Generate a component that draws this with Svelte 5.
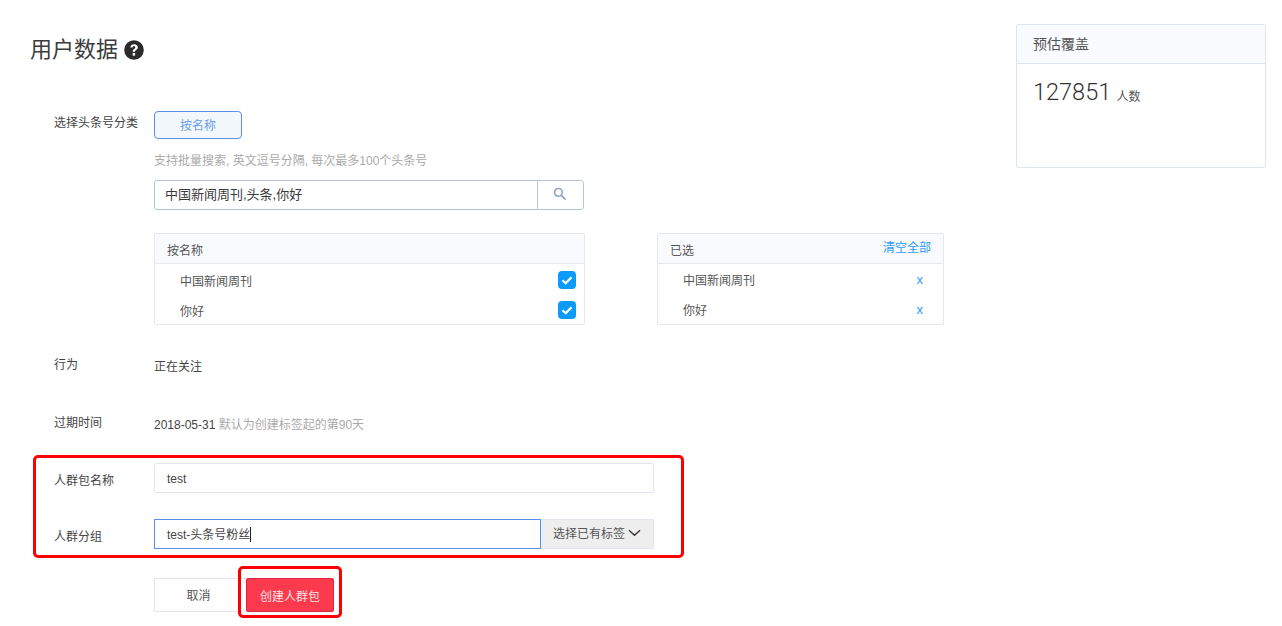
<script>
    const picked = ["中国新闻周刊", "你好"];
</script>

<div class="page">
    <main class="main">
        <h1 class="title">
            用户数据
            <svg class="help" viewBox="0 0 20 20" width="20" height="20">
                <circle cx="10" cy="10" r="9.800" fill="#2b2b2b" />
                <path d="M6.300 7.600c.2-2.200 1.700-3.400 3.800-3.400 2.200 0 3.700 1.300 3.700 3.100 0 1.400-.8 2.200-1.800 2.900-.8.5-1 .8-1 1.600H8.700c0-1.500.4-2.200 1.400-2.800.8-.5 1.200-.9 1.200-1.500 0-.7-.5-1.200-1.300-1.200-.9 0-1.400.5-1.500 1.300z" fill="#fff" />
                <rect x="8.700" y="13" width="2.400" height="2.600" fill="#fff" />
            </svg>
        </h1>

        <div class="row first">
            <div class="label">选择头条号分类</div>
            <div class="body">
                <button class="tab">按名称</button>
                <p class="hint">支持批量搜索, 英文逗号分隔, 每次最多100个头条号</p>
                <div class="search">
                    <div class="search-text">中国新闻周刊,头条,你好</div>
                    <div class="search-btn">
                        <svg viewBox="0 0 14 14" width="13" height="13" fill="none" stroke="#8fa6c2" stroke-width="1.700">
                            <circle cx="5.800" cy="5.800" r="4.200" />
                            <path d="M9 9l4 4" stroke-linecap="round" />
                        </svg>
                    </div>
                </div>
                <div class="panels">
                    <section class="panel left">
                        <div class="panel-head">按名称</div>
                        <ul class="list">
                            {#each picked as name}
                                <li>
                                    <span>{name}</span>
                                    <span class="check">
                                        <svg viewBox="0 0 18 18" width="18" height="18" fill="none" stroke="#fff" stroke-width="2.200">
                                            <path d="M4.500 9.200l3.200 3 5.800-6" />
                                        </svg>
                                    </span>
                                </li>
                            {/each}
                        </ul>
                    </section>
                    <section class="panel right">
                        <div class="panel-head">
                            <span>已选</span>
                            <a class="clear" href="#top">清空全部</a>
                        </div>
                        <ul class="list selected">
                            {#each picked as name}
                                <li>
                                    <span>{name}</span>
                                    <span class="remove">x</span>
                                </li>
                            {/each}
                        </ul>
                    </section>
                </div>
            </div>
        </div>

        <div class="row behave">
            <div class="label">行为</div>
            <div class="body value">正在关注</div>
        </div>

        <div class="row expire">
            <div class="label">过期时间</div>
            <div class="body value">2018-05-31 <span class="muted">默认为创建标签起的第90天</span></div>
        </div>

        <div class="marked">
            <div class="row name">
                <div class="label">人群包名称</div>
                <div class="body"><div class="input">test</div></div>
            </div>
            <div class="row group">
                <div class="label">人群分组</div>
                <div class="body group-field">
                    <div class="input focus">test-头条号粉丝<i class="caret"></i></div>
                    <div class="pick">
                        选择已有标签
                        <svg viewBox="0 0 14 8" width="13" height="8" fill="none" stroke="#333" stroke-width="1.400">
                            <path d="M1 1l6 5.500L13 1" />
                        </svg>
                    </div>
                </div>
            </div>
        </div>

        <div class="actions">
            <button class="cancel">取消</button>
            <div class="create-mark">
                <button class="create">创建人群包</button>
            </div>
        </div>
    </main>

    <aside class="card">
        <div class="card-head">预估覆盖</div>
        <div class="card-body"><span class="count">127851</span> <span class="unit">人数</span></div>
    </aside>
</div>

<style>
    :global(body) {
        margin: 0;
        background: #fff;
    }

    .page {
        display: flex;
        height: 626px;
        overflow: hidden;
        font-family: "Liberation Sans", "Noto Sans CJK SC", sans-serif;
        font-size: 12px;
        color: #444;
    }

    .main {
        flex: 1;
        padding-left: 30px;
    }

    .title {
        display: flex;
        align-items: center;
        gap: 6px;
        margin: 32px 0 0;
        height: 30px;
        font-size: 22px;
        font-weight: 400;
        color: #3c3c3c;
    }

    .help {
        margin-top: 6px;
    }

    .row {
        display: flex;
        padding-left: 24px;
    }

    .label {
        width: 100px;
        flex: none;
        line-height: 18px;
        color: #444;
    }

    .body {
        flex: none;
    }

    .first {
        margin-top: 49px;
    }

    .first .label {
        margin-top: 3px;
    }

    .tab {
        display: block;
        width: 88px;
        height: 28px;
        padding: 0 0 2px;
        border: 1px solid #5c8fe6;
        border-radius: 4px;
        background: #f3f8fd;
        color: #6b9cec;
        font: inherit;
    }

    .hint {
        margin: 13px 0 0;
        line-height: 18px;
        color: #aaa;
    }

    .search {
        display: flex;
        width: 430px;
        height: 30px;
        box-sizing: border-box;
        margin-top: 10px;
        border: 1px solid #b4c6dc;
        border-radius: 3px;
    }

    .search-text {
        flex: 1;
        padding-left: 10px;
        line-height: 27px;
        font-size: 13px;
        color: #3a3a3a;
    }

    .search-btn {
        display: flex;
        align-items: center;
        justify-content: center;
        box-sizing: border-box;
        width: 46px;
        padding: 0 2px 3px 0;
        border-left: 1px solid #b4c6dc;
    }

    .panels {
        display: flex;
        align-items: flex-start;
        margin-top: 23px;
    }

    .panel {
        height: 92px;
        box-sizing: border-box;
        border: 1px solid #e8e8e8;
        border-radius: 2px;
    }

    .panel.left {
        width: 431px;
    }

    .panel.right {
        width: 287px;
        margin-left: 72px;
    }

    .panel-head {
        display: flex;
        justify-content: space-between;
        height: 29px;
        padding: 0 12px;
        background: #f9fafd;
        border-bottom: 1px solid #e8e8e8;
        line-height: 35px;
        color: #555;
    }

    .clear {
        color: #2d9cf6;
        text-decoration: none;
        line-height: 29px;
    }

    .list {
        margin: 1px 0 0;
        padding: 0;
        list-style: none;
    }

    .list li {
        display: flex;
        align-items: center;
        justify-content: space-between;
        height: 30px;
        padding: 0 8px 0 25px;
        color: #555;
    }

    .list.selected {
        margin-top: 0;
    }

    .list.selected li {
        padding-right: 20px;
    }

    .check {
        display: flex;
        width: 18px;
        height: 18px;
        border-radius: 4px;
        background: #0d9bfa;
    }

    .remove {
        font-size: 13px;
        color: #2d9cf6;
    }

    .value {
        line-height: 18px;
        color: #444;
    }

    .behave {
        margin-top: 31px;
    }

    .behave .value {
        padding-top: 2px;
    }

    .expire {
        margin-top: 38px;
    }

    .expire .value {
        padding-top: 2px;
    }

    .muted {
        color: #aaa;
    }

    .marked {
        position: relative;
        margin-top: 29px;
    }

    .marked::after {
        content: "";
        position: absolute;
        left: 3px;
        top: -8px;
        width: 651px;
        height: 103px;
        box-sizing: border-box;
        border: 3px solid #f00;
        border-radius: 5px;
        pointer-events: none;
    }

    .name .label,
    .group .label {
        padding-top: 9px;
    }

    .group {
        margin-top: 26px;
    }

    .input {
        width: 500px;
        height: 30px;
        box-sizing: border-box;
        padding-left: 12px;
        border: 1px solid #e2e5f0;
        border-radius: 2px;
        line-height: 30px;
        color: #444;
    }

    .input.focus {
        width: 387px;
        border-color: #5b8fe8;
        border-radius: 0;
    }

    .caret {
        display: inline-block;
        width: 1px;
        height: 15px;
        background: #222;
        vertical-align: -3px;
    }

    .group-field {
        display: flex;
    }

    .pick {
        display: flex;
        align-items: center;
        gap: 3px;
        width: 113px;
        height: 30px;
        box-sizing: border-box;
        padding: 0 0 3px 12px;
        background: #eee;
        border: 1px solid #e2e5f0;
        border-left: 0;
        color: #555;
    }

    .actions {
        display: flex;
        margin: 29px 0 0 124px;
    }

    .cancel {
        width: 92px;
        height: 34px;
        padding: 0 4px 1px 0;
        border: 1px solid #e2e5f0;
        border-right: 0;
        border-radius: 2px 0 0 2px;
        background: #fff;
        color: #555;
        font: inherit;
    }

    .create-mark {
        position: relative;
    }

    .create-mark::after {
        content: "";
        position: absolute;
        left: -8px;
        top: -12px;
        width: 104px;
        height: 52px;
        box-sizing: border-box;
        border: 3px solid #f00;
        border-radius: 5px;
        pointer-events: none;
    }

    .create {
        display: block;
        width: 88px;
        height: 34px;
        padding: 0;
        border: 1px solid #e0263a;
        border-radius: 2px;
        background: #fb3b4d;
        color: #fde3e5;
        font: inherit;
    }

    .card {
        flex: none;
        width: 250px;
        height: 144px;
        box-sizing: border-box;
        margin: 24px 16px 0 0;
        border: 1px solid #dfe4f3;
        border-radius: 2px;
    }

    .card-head {
        height: 38px;
        padding-left: 16px;
        background: #fafbff;
        border-bottom: 1px solid #dfe4f3;
        font-size: 14px;
        line-height: 38px;
        color: #555;
    }

    .card-body {
        padding: 12px 0 0 16px;
    }

    .count {
        font-family: Roboto, "Liberation Sans", sans-serif;
        font-weight: 300;
        font-size: 23.500px;
        line-height: 32px;
        color: #333;
    }

    .unit {
        margin-left: 2px;
        vertical-align: -1px;
        color: #555;
    }
</style>
